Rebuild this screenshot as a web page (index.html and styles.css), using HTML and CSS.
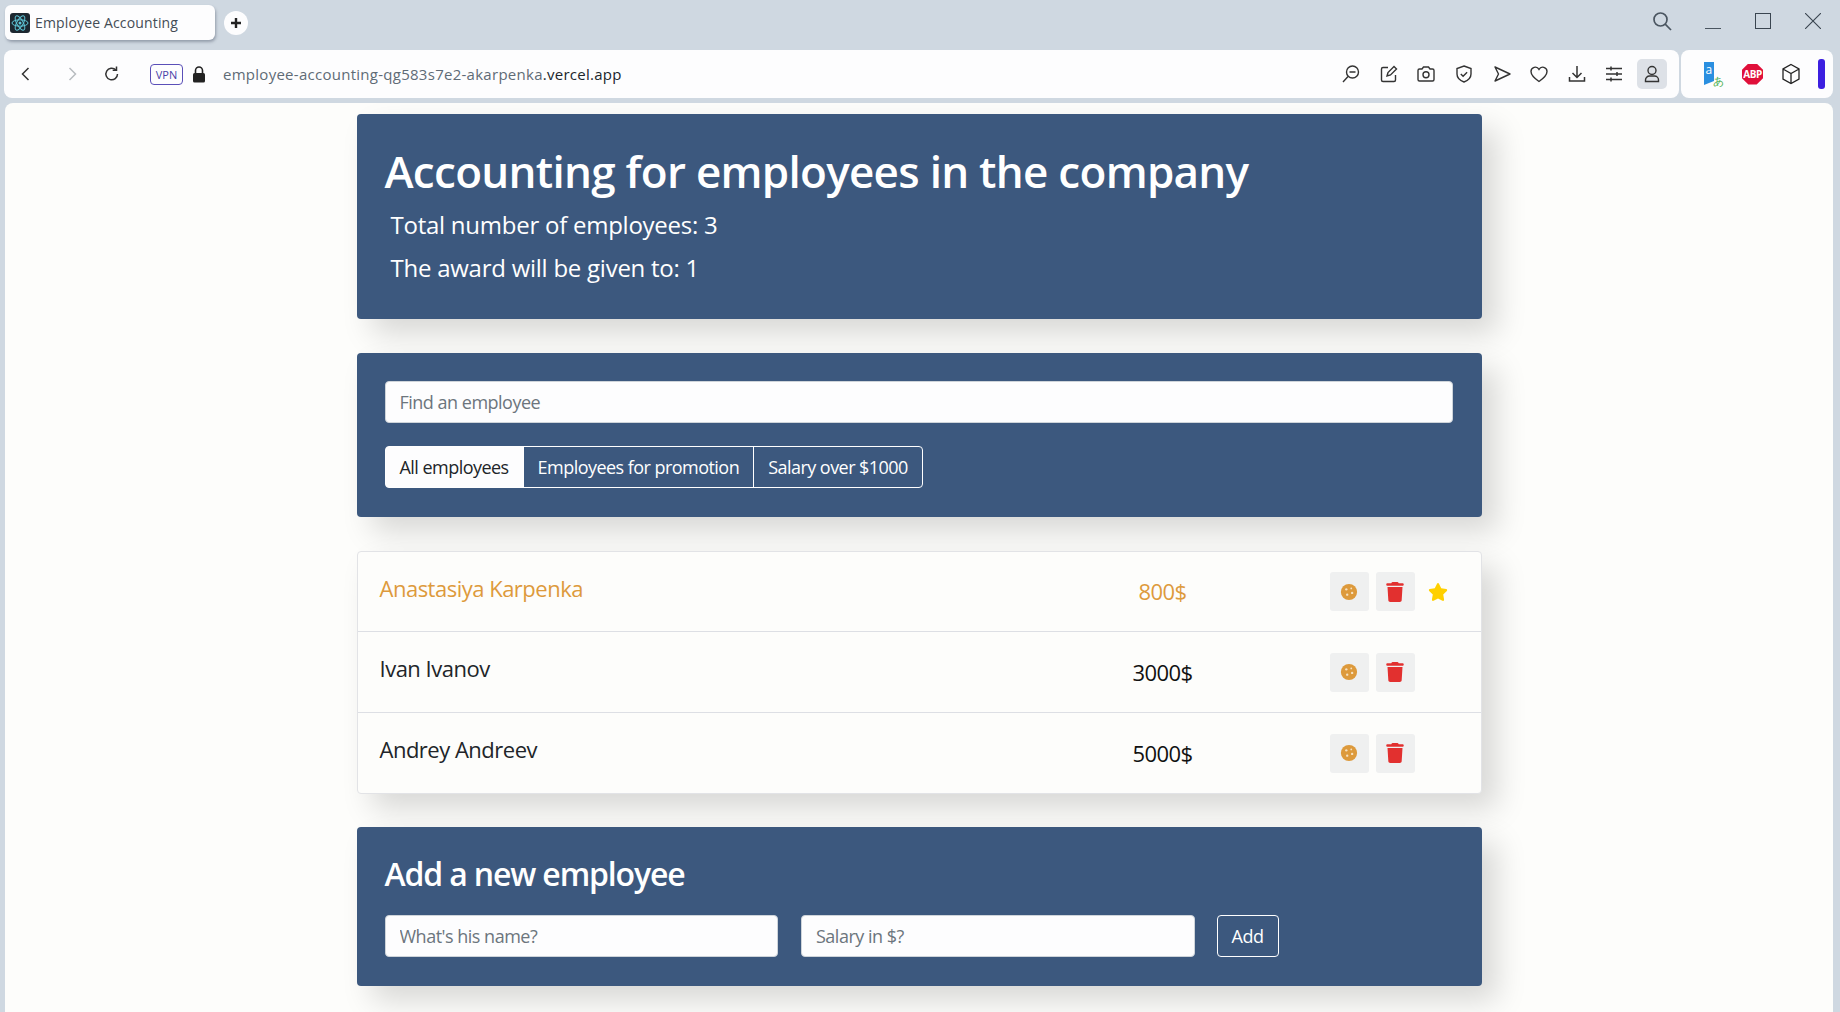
FILE: index.html
```html
<!DOCTYPE html>
<html lang="en">
<head>
    <meta charset="UTF-8">
    <meta name="viewport" content="width=device-width, initial-scale=1.0">
    <title>Employee Accounting</title>
    <link rel="stylesheet" href="styles.css">
</head>
<body>
    <svg class="defs" width="0" height="0">
        <symbol id="cookie" viewBox="0 0 20 20">
            <circle cx="10" cy="10" r="9" fill="#dd9a3c"/>
            <circle cx="7" cy="7" r="1.3" fill="#f6e2c2"/>
            <circle cx="12.5" cy="6" r="1" fill="#f6e2c2"/>
            <circle cx="13.5" cy="11" r="1.3" fill="#f6e2c2"/>
            <circle cx="8" cy="13" r="1.3" fill="#f6e2c2"/>
        </symbol>
        <symbol id="trash" viewBox="0 0 448 512">
            <path fill="#e2302f" d="M135.2 17.7L128 32H32C14.3 32 0 46.3 0 64S14.3 96 32 96H416c17.7 0 32-14.3 32-32s-14.3-32-32-32H320l-7.2-14.3C307.4 6.8 296.3 0 284.2 0H163.8c-12.1 0-23.2 6.8-28.6 17.7zM416 128H32L53.2 467c1.6 25.3 22.6 45 47.9 45H346.9c25.3 0 46.3-19.7 47.9-45L416 128z"/>
        </symbol>
    </svg>

    <div class="tabbar">
        <div class="tab">
            <svg class="favicon" viewBox="0 0 20 20">
                <rect width="20" height="20" rx="3" fill="#1c2730"/>
                <g fill="none" stroke="#5fc6d8" stroke-width="1">
                    <ellipse cx="10" cy="10" rx="8" ry="3.2"/>
                    <ellipse cx="10" cy="10" rx="8" ry="3.2" transform="rotate(60 10 10)"/>
                    <ellipse cx="10" cy="10" rx="8" ry="3.2" transform="rotate(120 10 10)"/>
                </g>
                <circle cx="10" cy="10" r="1.5" fill="#5fc6d8"/>
            </svg>
            <span>Employee Accounting</span>
        </div>
        <div class="new-tab">
            <svg width="12" height="12" viewBox="0 0 12 12"><path d="M6 1v10M1 6h10" stroke="#222" stroke-width="2.4"/></svg>
        </div>
        <div class="window-controls">
            <svg class="win-search" width="20" height="20" viewBox="0 0 20 20" fill="none" stroke="#4a5560" stroke-width="1.7"><circle cx="8.5" cy="8.5" r="6.5"/><path d="M13.2 13.2L19 19"/></svg>
            <svg class="win-min" width="16" height="16" viewBox="0 0 16 16" stroke="#4a5560"><path d="M0 15.5h16"/></svg>
            <svg class="win-max" width="16" height="16" viewBox="0 0 16 16" fill="none" stroke="#3a4550"><rect x=".5" y=".5" width="15" height="15"/></svg>
            <svg class="win-close" width="16" height="16" viewBox="0 0 16 16" stroke="#3a4550" stroke-width="1.1"><path d="M0 0l16 16M16 0L0 16"/></svg>
        </div>
    </div>

    <div class="toolbar">
        <div class="address-bar">
            <svg class="nav-icon" viewBox="0 0 20 20" fill="none" stroke="#333" stroke-width="1.5"><path d="M12.5 4l-6 6 6 6"/></svg>
            <svg class="nav-icon" viewBox="0 0 20 20" fill="none" stroke="#b8bcc0" stroke-width="1.5"><path d="M7.5 4l6 6-6 6"/></svg>
            <svg class="nav-icon reload" viewBox="0 0 20 20" fill="none" stroke="#333" stroke-width="1.5"><path d="M15.5 10a5.8 5.8 0 1 1-1.7-4.1"/><path d="M14.5 2.5v3.8h-3.8" /></svg>
            <span class="vpn">VPN</span>
            <svg class="lock" width="14" height="17" viewBox="0 0 14 17"><path d="M3.5 7V4.5a3.5 3.5 0 0 1 7 0V7" fill="none" stroke="#222" stroke-width="1.6"/><rect x="1" y="7" width="12" height="9.5" rx="1.5" fill="#222"/></svg>
            <div class="url">employee-accounting-qg583s7e2-akarpenka<b>.vercel.app</b></div>
            <div class="tools">
                <svg viewBox="0 0 20 20" fill="none" stroke="#333" stroke-width="1.4"><circle cx="11.5" cy="8" r="6"/><path d="M8.5 8h6M7 12.5L2 18"/></svg>
                <svg viewBox="0 0 20 20" fill="none" stroke="#333" stroke-width="1.4"><path d="M9 3.500H4a1.500 1.500 0 0 0-1.500 1.500v11A1.500 1.500 0 0 0 4 17.500h11a1.500 1.500 0 0 0 1.500-1.500v-5"/><path d="M8 12l1-3.500 6-6 2.500 2.500-6 6z"/></svg>
                <svg viewBox="0 0 20 20" fill="none" stroke="#333" stroke-width="1.4"><path d="M2 6.500A1.500 1.500 0 0 1 3.500 5H6l1.500-2h5L14 5h2.500A1.500 1.500 0 0 1 18 6.500v9a1.500 1.500 0 0 1-1.500 1.500h-13A1.500 1.500 0 0 1 2 15.500z"/><circle cx="10" cy="10.800" r="3"/></svg>
                <svg viewBox="0 0 20 20" fill="none" stroke="#333" stroke-width="1.4"><path d="M10 2l7 2.500V10c0 4-3 6.500-7 8-4-1.500-7-4-7-8V4.500z"/><path d="M6.800 10l2.300 2.300 4-4"/></svg>
                <svg viewBox="0 0 20 20" fill="none" stroke="#333" stroke-width="1.4" stroke-linejoin="round"><path d="M3 3l15 7-15 7 3.500-7z"/></svg>
                <svg viewBox="0 0 20 20" fill="none" stroke="#333" stroke-width="1.4"><path d="M10 17.500C5 14 2 11 2 7.500A4.300 4.300 0 0 1 10 5.300a4.300 4.300 0 0 1 8 2.200c0 3.500-3 6.500-8 10z"/></svg>
                <svg viewBox="0 0 20 20" fill="none" stroke="#333" stroke-width="1.5"><path d="M10 2v11M5.500 9l4.500 4.500L14.500 9M2.500 13v4h15v-4"/></svg>
                <svg viewBox="0 0 20 20" fill="none" stroke="#333" stroke-width="1.5"><path d="M2 4.500h16M2 10h16M2 15.500h16"/><path d="M7 2.500v4M13 8v4M7 13.500v4"/></svg>
                <div class="profile">
                    <svg viewBox="0 0 20 20" fill="none" stroke="#333" stroke-width="1.4"><circle cx="10" cy="6.500" r="4"/><path d="M3.500 17.500v-1.500a4 4 0 0 1 4-4h5a4 4 0 0 1 4 4v1.500z"/></svg>
                </div>
            </div>
        </div>
        <div class="extensions">
            <svg width="22" height="26" viewBox="0 0 22 26"><path d="M2 1h10v19l-10 4z" fill="#2a8fe0"/><text x="3.500" y="13" font-size="12" fill="#fff" font-family="Liberation Sans">a</text><text x="11" y="24" font-size="11" fill="#4caf50" font-family="Noto Sans CJK JP">あ</text></svg>
            <div class="abp">ABP</div>
            <svg width="20" height="22" viewBox="0 0 20 22" fill="none" stroke="#222" stroke-width="1.300"><path d="M10 1.500l8 4.500v10l-8 4.500-8-4.500V6zM2 6l8 4.500L18 6M10 10.500v10"/></svg>
            <div class="ext-bar"></div>
        </div>
    </div>

    <div class="page">
        <main class="app">
            <section class="panel info">
                <h1>Accounting for employees in the company</h1>
                <h2>Total number of employees: 3</h2>
                <h2>The award will be given to: 1</h2>
            </section>

            <section class="panel search">
                <input class="field" type="text" placeholder="Find an employee">
                <div class="btn-group">
                    <button class="btn active">All employees</button>
                    <button class="btn">Employees for promotion</button>
                    <button class="btn">Salary over $1000</button>
                </div>
            </section>

            <ul class="list">
                <li class="row rising">
                    <span class="name">Anastasiya Karpenka</span>
                    <span class="salary">800$</span>
                    <div class="actions">
                        <button class="icon-btn"><svg width="18" height="18"><use href="#cookie"/></svg></button>
                        <button class="icon-btn"><svg width="18" height="20"><use href="#trash"/></svg></button>
                        <svg class="star" width="20" height="18" viewBox="0 0 576 512"><path fill="#ffd000" d="M316.9 18C311.6 7 300.4 0 288.1 0s-23.4 7-28.8 18L195 150.3 51.4 171.5c-12 1.8-22 10.2-25.7 21.7s-.7 24.2 7.9 32.7L137.8 329 113.2 474.7c-2 12 3 24.2 12.9 31.3s23 8 33.8 2.3l128.3-68.5 128.3 68.5c10.8 5.7 23.9 4.9 33.8-2.3s14.9-19.3 12.9-31.3L438.5 329 542.7 225.9c8.6-8.5 11.7-21.2 7.9-32.7s-13.7-19.9-25.7-21.7L381.2 150.3 316.9 18z"/></svg>
                    </div>
                </li>
                <li class="row">
                    <span class="name">Ivan Ivanov</span>
                    <span class="salary">3000$</span>
                    <div class="actions">
                        <button class="icon-btn"><svg width="18" height="18"><use href="#cookie"/></svg></button>
                        <button class="icon-btn"><svg width="18" height="20"><use href="#trash"/></svg></button>
                    </div>
                </li>
                <li class="row">
                    <span class="name">Andrey Andreev</span>
                    <span class="salary">5000$</span>
                    <div class="actions">
                        <button class="icon-btn"><svg width="18" height="18"><use href="#cookie"/></svg></button>
                        <button class="icon-btn"><svg width="18" height="20"><use href="#trash"/></svg></button>
                    </div>
                </li>
            </ul>

            <section class="panel add">
                <h3>Add a new employee</h3>
                <form class="add-form">
                    <input class="field" type="text" placeholder="What's his name?">
                    <input class="field" type="text" placeholder="Salary in $?">
                    <button class="btn add-btn" type="button">Add</button>
                </form>
            </section>
        </main>
    </div>
</body>
</html>
```

FILE: styles.css
```css
* {
    margin: 0;
    padding: 0;
    box-sizing: border-box;
    font-family: "Open Sans", sans-serif;
}

html, body {
    height: 1012px;
    overflow: hidden;
}

body {
    background-color: #cfd8e1;
    color: #212529;
    display: flex;
    flex-direction: column;
}

.defs {
    position: absolute;
}

/* browser chrome */
.tabbar {
    height: 50px;
    padding: 5px 0 0 5px;
    display: flex;
    align-items: flex-start;
    flex-shrink: 0;
}

.tab {
    width: 210px;
    height: 35px;
    background: #fdfdfe;
    border-radius: 6px;
    box-shadow: 1px 2px 3px rgba(60, 70, 90, 0.4);
    display: flex;
    align-items: center;
    gap: 5px;
    padding-left: 5px;
    font-size: 14px;
    letter-spacing: 0.15px;
    color: #444c55;
}

.favicon {
    width: 20px;
    height: 20px;
}

.new-tab {
    width: 24px;
    height: 24px;
    margin: 6px 0 0 9px;
    background: #fdfdfe;
    border-radius: 50%;
    display: flex;
    align-items: center;
    justify-content: center;
}

.window-controls {
    margin-left: auto;
    height: 32px;
    padding-right: 19px;
    display: flex;
    align-items: center;
}

.win-search {
    margin-right: 33px;
}

.win-min {
    margin-right: 34px;
}

.win-max {
    margin-right: 34px;
}

.toolbar {
    height: 48px;
    display: flex;
    gap: 2px;
    padding: 0 7px 0 4px;
    flex-shrink: 0;
}

.address-bar {
    flex: 1;
    background: #fdfdfe;
    border-radius: 8px;
    display: flex;
    align-items: center;
    padding-left: 12px;
}

.nav-icon {
    width: 20px;
    height: 20px;
    margin-right: 26px;
}

.nav-icon.reload {
    margin-left: -6px;
    margin-right: 27px;
}

.vpn {
    width: 33px;
    height: 21px;
    margin-left: 1px;
    border: 1px solid #5a4fb8;
    border-radius: 4px;
    color: #4a3fa8;
    font-size: 11px;
    line-height: 19px;
    text-align: center;
}

.lock {
    margin-left: 9px;
}

.url {
    margin-left: 17px;
    font-size: 15px;
    color: #5f6b76;
    letter-spacing: 0.27px;
}

.url b {
    font-weight: normal;
    color: #20262c;
}

.tools {
    margin-left: auto;
    padding-right: 12px;
    display: flex;
    align-items: center;
    gap: 17.6px;
}

.tools svg {
    width: 20px;
    height: 20px;
    display: block;
}

.profile {
    width: 30px;
    height: 30px;
    margin-left: -5px;
    background: #dde1e7;
    border-radius: 5px;
    display: flex;
    align-items: center;
    justify-content: center;
}

.extensions {
    width: 152px;
    background: #fdfdfe;
    border-radius: 8px;
    display: flex;
    align-items: center;
    padding-left: 21px;
    gap: 18px;
}

.abp {
    width: 21px;
    height: 21px;
    background: #e0103a;
    clip-path: polygon(30% 0, 70% 0, 100% 30%, 100% 70%, 70% 100%, 30% 100%, 0 70%, 0 30%);
    color: #fff;
    font-size: 10px;
    font-weight: bold;
    line-height: 21px;
    text-align: center;
    letter-spacing: -0.5px;
}

.ext-bar {
    width: 7px;
    height: 30px;
    margin-left: -1px;
    border-radius: 3px;
    background: #3c1fe0;
}

/* page */
.page {
    flex: 1;
    margin: 5px 7px 0 5px;
    padding-top: 11px;
    background: #fdfdfb;
    border-radius: 8px 8px 0 0;
    display: flex;
    justify-content: center;
    overflow: hidden;
}

.app {
    width: 1125px;
    display: flex;
    flex-direction: column;
    align-items: stretch;
}

.panel {
    background: #3c587e;
    border-radius: 4px;
    padding: 28px;
    color: #fff;
    box-shadow: 15px 15px 30px rgba(0, 0, 0, 0.15);
}

.info {
    height: 205px;
    padding-top: 27px;
    margin-bottom: 34px;
}

h1 {
    font-size: 44px;
    font-weight: 600;
    line-height: 60px;
    letter-spacing: -0.72px;
    margin-bottom: 9px;
}

h2 {
    font-size: 24px;
    font-weight: 400;
    line-height: 29px;
    margin: 0 0 14px 6px;
    letter-spacing: -0.25px;
}

.search {
    height: 164px;
    margin-bottom: 34px;
    padding-right: 29px;
}

.field {
    display: block;
    height: 42px;
    padding: 0 14px;
    border: 1px solid #ced4da;
    border-radius: 4px;
    background: #fdfdfe;
    font-size: 18px;
    letter-spacing: -0.5px;
    color: #212529;
}

.field::placeholder {
    color: #6c757d;
}

.search .field {
    width: 100%;
    margin-bottom: 23px;
}

.btn-group {
    display: flex;
}

.btn {
    height: 42px;
    padding: 0 14px;
    background: transparent;
    border: 1px solid #fff;
    color: #fff;
    font-size: 18px;
    letter-spacing: -0.54px;
}

.btn-group .btn + .btn {
    margin-left: -1px;
}

.btn-group .btn:first-child {
    border-radius: 4px 0 0 4px;
}

.btn-group .btn:last-child {
    border-radius: 0 4px 4px 0;
}

.btn.active {
    background: #fdfdfe;
    color: #212529;
}

.list {
    list-style: none;
    height: 243px;
    margin-bottom: 33px;
    background: #fdfdfb;
    border: 1px solid #e2e3e6;
    border-radius: 4px;
    box-shadow: 15px 15px 30px rgba(0, 0, 0, 0.15);
}

.row {
    height: 80px;
    padding: 0 21px 0 22px;
    display: flex;
    align-items: center;
    font-size: 22px;
    border-bottom: 1px solid #dddfe4;
}

.row + .row {
    height: 81px;
}

.row:last-child {
    height: 80px;
    border-bottom: 0;
}

.name {
    flex: 1;
    margin-bottom: 8px;
    letter-spacing: -0.5px;
}

.salary {
    width: 120px;
    margin-right: 107px;
    margin-bottom: 1px;
    text-align: center;
    color: #111;
    letter-spacing: -0.6px;
}

.rising .name, .rising .salary {
    color: #dd9a3c;
}

.actions {
    width: 130px;
    display: flex;
    align-items: center;
    gap: 7px;
}

.icon-btn {
    width: 39px;
    height: 39px;
    border: 0;
    border-radius: 3px;
    background: #eff0f0;
    display: flex;
    align-items: center;
    justify-content: center;
}

.star {
    margin-left: 6px;
}

.add {
    height: 159px;
    padding-top: 26px;
}

h3 {
    font-size: 32px;
    font-weight: 600;
    line-height: 42px;
    letter-spacing: -1.15px;
    margin-bottom: 20px;
}

.add-form {
    display: flex;
    gap: 23px;
}

.add-form .field {
    width: 393.5px;
}

.add-btn {
    border-radius: 4px;
    width: 62px;
    padding: 0;
    margin-left: -1px;
}
```
